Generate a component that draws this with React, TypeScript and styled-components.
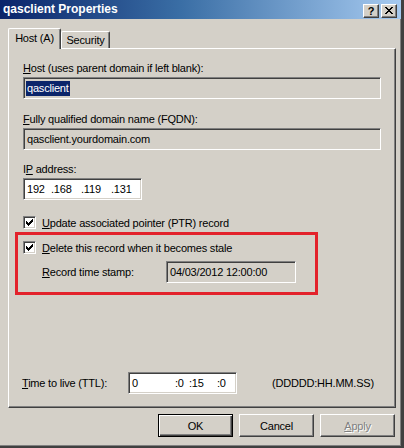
import React from 'react';
import styled, { createGlobalStyle } from 'styled-components';

const Global = createGlobalStyle`
  html, body { margin: 0; padding: 0; background: #d4d0c8; }
  body {
    font-family: "Liberation Sans", Arial, sans-serif;
    font-size: 11px;
    color: #000;
    letter-spacing: -0.2px;
  }
  * { box-sizing: border-box; }
`;

const Window = styled.div`
  width: 404px;
  height: 448px;
  background: #d4d0c8;
  border-right: 3px solid #404040;
  border-bottom: 2px solid #404040;
  box-shadow: inset -1px -1px #808080;
  display: flex;
  flex-direction: column;
`;

const TitleBar = styled.div`
  height: 19px;
  flex: 0 0 19px;
  display: flex;
  align-items: center;
  padding: 0 4px 0 3px;
  background: linear-gradient(to right, #0a246a 0%, #3a6ea5 45%, #a6caf0 100%);
`;

const Title = styled.div`
  flex: 1;
  color: #fff;
  font-weight: bold;
  font-size: 12px;
  letter-spacing: 0;
  line-height: 19px;
`;

const TitleButtons = styled.div`
  display: flex;
  gap: 2px;
  margin-top: 2px;
`;

const CaptionButton = styled.div`
  width: 16px;
  height: 14px;
  background: #d4d0c8;
  border: 1px solid;
  border-color: #fff #404040 #404040 #fff;
  box-shadow: inset -1px -1px #808080;
  display: flex;
  align-items: center;
  justify-content: center;
  font-weight: bold;
  font-size: 11px;
  line-height: 12px;
  letter-spacing: 0;
`;

const Body = styled.div`
  flex: 1;
  display: flex;
  flex-direction: column;
  padding: 9px 5px 0 8px;
`;

const TabStrip = styled.div`
  display: flex;
  align-items: flex-end;
  height: 20px;
  position: relative;
  z-index: 1;
`;

const Tab = styled.div<{ $active?: boolean }>`
  background: #d4d0c8;
  border-top: 1px solid #fff;
  border-left: 1px solid #fff;
  border-right: 1px solid #404040;
  box-shadow: inset -1px 0 #808080;
  border-radius: 2px 2px 0 0;
  width: ${(p) => (p.$active ? 53 : 49)}px;
  height: ${(p) => (p.$active ? 21 : 17)}px;
  margin-bottom: ${(p) => (p.$active ? -1 : 0)}px;
  display: flex;
  align-items: center;
  justify-content: center;
  padding-bottom: ${(p) => (p.$active ? 2 : 0)}px;
  line-height: 13px;
`;

const Panel = styled.div`
  height: 360px;
  flex: 0 0 360px;
  border: 1px solid;
  border-color: #fff #404040 #404040 #fff;
  box-shadow: inset -1px -1px #808080;
  display: flex;
  flex-direction: column;
  padding: 13px 0 13px 14px;
`;

const Label = styled.div<{ $mt?: number }>`
  line-height: 13px;
  height: 13px;
  margin-top: ${(p) => p.$mt ?? 0}px;
  white-space: nowrap;
`;

const Key = styled.span`
  text-decoration: underline;
  text-underline-offset: 1px;
`;

const Sunken = styled.div<{ $w: number; $white?: boolean; $mt?: number }>`
  width: ${(p) => p.$w}px;
  height: 22px;
  margin-top: ${(p) => p.$mt ?? 0}px;
  background: ${(p) => (p.$white ? '#fff' : '#d4d0c8')};
  border: 1px solid;
  border-color: #808080 #fff #fff #808080;
  box-shadow: inset 1px 1px #404040, inset -1px -1px #d4d0c8;
  display: flex;
  align-items: center;
  padding-left: 2px;
  white-space: nowrap;
  flex: 0 0 auto;
`;

const Selected = styled.span`
  background: #0a246a;
  color: #fff;
  padding: 1px 1px 1px 1px;
  line-height: 13px;
`;

const PlainText = styled.span`
  padding-left: 1px;
`;

const Segment = styled.span<{ $w: number }>`
  display: inline-block;
  width: ${(p) => p.$w}px;
  flex: 0 0 auto;
`;

const CheckRow = styled.div<{ $mt?: number }>`
  display: flex;
  align-items: center;
  gap: 6px;
  height: 13px;
  margin-top: ${(p) => p.$mt ?? 0}px;
  white-space: nowrap;
`;

const CheckBox = styled.div`
  width: 13px;
  height: 13px;
  flex: 0 0 13px;
  background: #fff;
  border: 1px solid;
  border-color: #808080 #fff #fff #808080;
  box-shadow: inset 1px 1px #404040, inset -1px -1px #d4d0c8;
  display: flex;
  align-items: center;
  justify-content: center;
`;

const Highlight = styled.div`
  width: 303px;
  margin: 3px 0 0 -8px;
  border: 3px solid #e3222b;
  padding: 6px 0 9px 5px;
  display: flex;
  flex-direction: column;
`;

const StampRow = styled.div`
  display: flex;
  align-items: center;
  margin-top: 7px;
  padding-left: 19px;
`;

const StampLabel = styled.div`
  width: 124px;
  flex: 0 0 124px;
`;

const TtlRow = styled.div`
  margin-top: auto;
  display: flex;
  align-items: center;
  margin-left: -1px;
`;

const TtlLabel = styled.div`
  width: 106px;
  flex: 0 0 106px;
`;

const Format = styled.div`
  margin-left: 35px;
`;

const ButtonRow = styled.div`
  display: flex;
  justify-content: flex-end;
  gap: 6px;
  margin-top: 6px;
  padding-right: 1px;
`;

const Button = styled.div<{ $default?: boolean; $disabled?: boolean }>`
  width: 75px;
  height: 23px;
  display: flex;
  align-items: center;
  justify-content: center;
  background: #d4d0c8;
  border: 1px solid;
  border-color: ${(p) => (p.$default ? '#000' : '#fff #404040 #404040 #fff')};
  box-shadow: ${(p) =>
    p.$default
      ? 'inset 1px 1px #fff, inset -1px -1px #404040, inset -2px -2px #808080'
      : 'inset -1px -1px #808080'};
  color: ${(p) => (p.$disabled ? '#808080' : '#000')};
  text-shadow: ${(p) => (p.$disabled ? '1px 1px #fff' : 'none')};
`;

const CheckMark = () => {
  const cols = [2, 3, 4, 3, 2, 1, 0];
  return (
    <svg width="7" height="7" viewBox="0 0 7 7" shapeRendering="crispEdges">
      {cols.map((y, x) => (
        <rect key={x} x={x} y={y} width="1" height="3" fill="#000" />
      ))}
    </svg>
  );
};

const CloseGlyph = () => {
  const px: [number, number][] = [];
  const rows = ['xx....xx', '.xx..xx.', '..xxxx..', '...xx...', '..xxxx..', '.xx..xx.', 'xx....xx'];
  rows.forEach((r, y) => r.split('').forEach((c, x) => c === 'x' && px.push([x, y])));
  return (
    <svg width="8" height="7" viewBox="0 0 8 7" shapeRendering="crispEdges">
      {px.map(([x, y]) => (
        <rect key={`${x}-${y}`} x={x} y={y} width="1" height="1" fill="#000" />
      ))}
    </svg>
  );
};

export default function App() {
  return (
    <>
      <Global />
      <Window>
        <TitleBar>
          <Title>qasclient Properties</Title>
          <TitleButtons>
            <CaptionButton>?</CaptionButton>
            <CaptionButton>
              <CloseGlyph />
            </CaptionButton>
          </TitleButtons>
        </TitleBar>
        <Body>
          <TabStrip>
            <Tab $active>Host (A)</Tab>
            <Tab>Security</Tab>
          </TabStrip>
          <Panel>
            <Label>
              <Key>H</Key>ost (uses parent domain if left blank):
            </Label>
            <Sunken $w={358} $mt={2}>
              <Selected>qasclient</Selected>
            </Sunken>
            <Label $mt={14}>
              <Key>F</Key>ully qualified domain name (FQDN):
            </Label>
            <Sunken $w={358} $mt={2}>
              <PlainText>qasclient.yourdomain.com</PlainText>
            </Sunken>
            <Label $mt={13}>
              I<Key>P</Key> address:
            </Label>
            <Sunken $w={119} $white $mt={2}>
              <Segment $w={25} style={{ paddingLeft: 1 }}>192</Segment>
              <Segment $w={30}>.168</Segment>
              <Segment $w={30}>.119</Segment>
              <Segment $w={28}>.131</Segment>
            </Sunken>
            <CheckRow $mt={16}>
              <CheckBox>
                <CheckMark />
              </CheckBox>
              <span>
                <Key>U</Key>pdate associated pointer (PTR) record
              </span>
            </CheckRow>
            <Highlight>
              <CheckRow>
                <CheckBox>
                  <CheckMark />
                </CheckBox>
                <span>
                  <Key>D</Key>elete this record when it becomes stale
                </span>
              </CheckRow>
              <StampRow>
                <StampLabel>
                  <Key>R</Key>ecord time stamp:
                </StampLabel>
                <Sunken $w={130}>
                  <PlainText>04/03/2012 12:00:00</PlainText>
                </Sunken>
              </StampRow>
            </Highlight>
            <TtlRow>
              <TtlLabel>
                <Key>T</Key>ime to live (TTL):
              </TtlLabel>
              <Sunken $w={109} $white>
                <Segment $w={44} style={{ paddingLeft: 1 }}>0</Segment>
                <Segment $w={14}>:0</Segment>
                <Segment $w={28}>:15</Segment>
                <Segment $w={18}>:0</Segment>
              </Sunken>
              <Format>(DDDDD:HH.MM.SS)</Format>
            </TtlRow>
          </Panel>
          <ButtonRow>
            <Button $default>OK</Button>
            <Button>Cancel</Button>
            <Button $disabled>
              <span>
                <Key>A</Key>pply
              </span>
            </Button>
          </ButtonRow>
        </Body>
      </Window>
    </>
  );
}
